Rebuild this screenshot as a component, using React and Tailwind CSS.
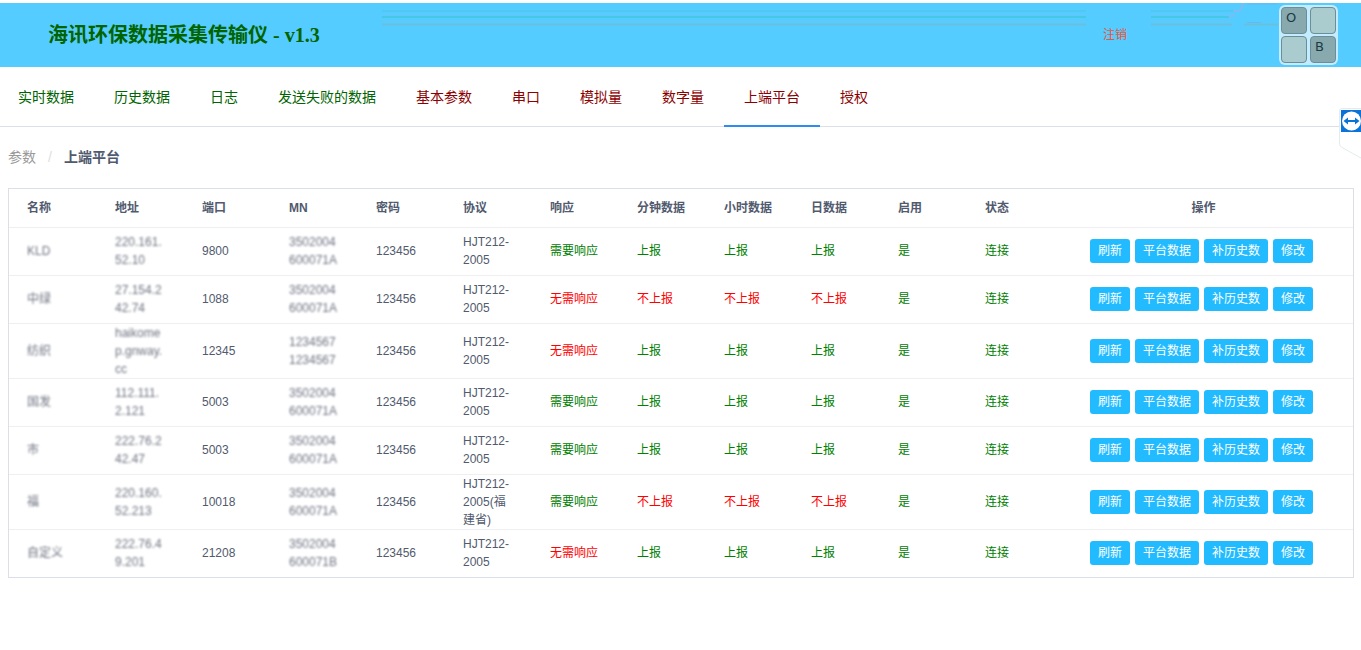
import { useState } from 'react';
import clsx from 'clsx';

const tabs = [
    { name: '实时数据', admin: false },
    { name: '历史数据', admin: false },
    { name: '日志', admin: false },
    { name: '发送失败的数据', admin: false },
    { name: '基本参数', admin: true },
    { name: '串口', admin: true },
    { name: '模拟量', admin: true },
    { name: '数字量', admin: true },
    { name: '上端平台', admin: true },
    { name: '授权', admin: true }
];

const platforms = [
    { id: 1, name: 'KLD', address: '220.161.52.10', port: 9800, mn: '3502004600071A', password: '123456', protocol: 'HJT212-2005', response: true, upload: true },
    { id: 2, name: '中绿', address: '27.154.242.74', port: 1088, mn: '3502004600071A', password: '123456', protocol: 'HJT212-2005', response: false, upload: false },
    { id: 3, name: '纺织', address: 'haikomep.gnway.cc', port: 12345, mn: '12345671234567', password: '123456', protocol: 'HJT212-2005', response: false, upload: true },
    { id: 4, name: '国发', address: '112.111.2.121', port: 5003, mn: '3502004600071A', password: '123456', protocol: 'HJT212-2005', response: true, upload: true },
    { id: 5, name: '市', address: '222.76.242.47', port: 5003, mn: '3502004600071A', password: '123456', protocol: 'HJT212-2005', response: true, upload: true },
    { id: 6, name: '福', address: '220.160.52.213', port: 10018, mn: '3502004600071A', password: '123456', protocol: 'HJT212-2005(福建省)', response: true, upload: false },
    { id: 7, name: '自定义', address: '222.76.49.201', port: 21208, mn: '3502004600071B', password: '123456', protocol: 'HJT212-2005', response: false, upload: true }
];

const Masked = ({ children }) => (
    <span className="text-[#6f7482] blur-[1px]">{children}</span>
);

const Flag = ({ on, yes, no }) => (
    <span className={on ? 'text-[#008000]' : 'text-[#ff0000]'}>{on ? yes : no}</span>
);

const columns = [
    { key: 'name', label: '名称', width: 'w-[88px]', render: (val) => <Masked>{val}</Masked> },
    { key: 'address', label: '地址', render: (val) => <Masked>{val}</Masked> },
    { key: 'port', label: '端口' },
    { key: 'mn', label: 'MN', render: (val) => <Masked>{val}</Masked> },
    { key: 'password', label: '密码' },
    { key: 'protocol', label: '协议' },
    { key: 'response', label: '响应', render: (val) => <Flag on={val} yes="需要响应" no="无需响应" /> },
    { key: 'minute', label: '分钟数据', render: (_, row) => <Flag on={row.upload} yes="上报" no="不上报" /> },
    { key: 'hour', label: '小时数据', render: (_, row) => <Flag on={row.upload} yes="上报" no="不上报" /> },
    { key: 'day', label: '日数据', render: (_, row) => <Flag on={row.upload} yes="上报" no="不上报" /> },
    { key: 'enabled', label: '启用', render: () => <Flag on yes="是" /> },
    { key: 'status', label: '状态', render: () => <Flag on yes="连接" /> }
];

const actions = ['刷新', '平台数据', '补历史数', '修改'];

const HeaderLines = () => (
    <div className="absolute inset-x-0 top-0 pointer-events-none flex pl-[382px] pr-[82px]">
        <svg className="h-[26px] grow" viewBox="0 0 704 26" preserveAspectRatio="none" fill="none">
            <path d="M0 8H704" stroke="#4dc9f2" strokeWidth="2" />
            <path d="M0 11.5H704M0 18.5H704" stroke="#66c6fa" />
            <path d="M0 14H704" stroke="#44c8e6" strokeWidth="2" />
            <path d="M0 21.5H704" stroke="#6bbfdc" strokeWidth="2" />
        </svg>
        <svg className="h-[26px] w-[193px] shrink-0" viewBox="0 0 193 26" fill="none">
            <path d="M65 8H150" stroke="#4dc9f2" strokeWidth="2" />
            <path d="M65 11.5H146M65 18.5H144" stroke="#66c6fa" />
            <path d="M65 14H144" stroke="#44c8e6" strokeWidth="2" />
            <path d="M65 21.5H146M158 21.5H192" stroke="#6bbfdc" strokeWidth="2" />
            <path d="M161 1H192M161 19.5H175" stroke="#66b8f0" />
            <path d="M143 14L149 12M147 8H152Q156 7 157 0" stroke="#7cbcf2" strokeWidth="2" />
        </svg>
    </div>
);

const KeyPad = () => (
    <div className="relative grid grid-cols-2 gap-x-[3px] gap-y-[2px] rounded-md bg-[#c4ecff] p-[2px] font-['DejaVu_Sans',sans-serif] text-[13px] leading-5 text-[#1b3a44]">
        <div className="h-[27px] w-[26px] rounded-[4px] border border-[#6a8f98] bg-[#88aaaf] pl-1">O</div>
        <div className="h-[27px] w-[26px] rounded-[4px] border border-[#6a8f98] bg-[#aacccf]" />
        <div className="h-[27px] w-[26px] rounded-[4px] border border-[#6a8f98] bg-[#aacccf]" />
        <div className="h-[27px] w-[26px] rounded-[4px] border border-[#6a8f98] bg-[#88aaaf] pl-1">B</div>
    </div>
);

const RemoteHandle = () => (
    <svg className="fixed right-0 top-[108px] h-[52px] w-[22px]" viewBox="0 0 22 52" fill="none">
        <path d="M22 50L3 39.500Q0.5 38 0.5 36V3Q0.5 0.5 3 0.5H22" fill="#fff" stroke="#e2ebee" />
        <rect x="2" y="2" width="20" height="22" fill="#0a73d9" />
        <circle cx="12.500" cy="13" r="9.500" fill="#fff" />
        <path d="M4.500 13L9 9.500V12H16V9.500L20.500 13L16 16.500V14H9V16.500Z" fill="#0a73d9" />
    </svg>
);

const App = () => {
    const [active, setActive] = useState('上端平台');

    return (
        <div className="bg-white pt-[3px] font-['Liberation_Sans','Noto_Sans_CJK_SC',sans-serif] text-[#515a6e]">
            <header className="relative flex h-16 items-center bg-[#55ccff] pl-12 pr-[23px]">
                <HeaderLines />
                <h1 className="relative font-['Liberation_Serif','Noto_Sans_CJK_SC',serif] text-xl font-bold text-[#006400]">海讯环保数据采集传输仪 - v1.3</h1>
                <a href="#logout" className="relative ml-auto mr-[152px] text-xs text-[#e8553a]">注销</a>
                <KeyPad />
            </header>

            <nav className="flex h-[60px] gap-10 border-b border-[#dcdee8] pl-[18px] text-sm">
                {tabs.map(tab => (
                    <a
                        key={tab.name}
                        href={`#${tab.name}`}
                        onClick={() => setActive(tab.name)}
                        className={clsx(
                            '-mx-5 h-[60px] border-b-2 px-5 leading-[60px]',
                            tab.admin ? 'text-[#8b0000]' : 'text-[#006400]',
                            tab.name === active ? 'border-[#2d8cf0]' : 'border-transparent'
                        )}
                    >
                        {tab.name}
                    </a>
                ))}
            </nav>

            <main className="px-2 pt-5">
                <div className="flex text-sm">
                    <a href="#params" className="text-[#999999]">参数</a>
                    <span className="mx-3 text-[#dcdee2]">/</span>
                    <span className="font-bold">上端平台</span>
                </div>

                <div className="mr-[-1px] mt-[21px] border border-[#dcdee8]">
                    <table className="w-full table-fixed border-collapse text-xs leading-[18px]">
                        <colgroup>
                            {columns.map(col => <col key={col.key} className={col.width} />)}
                            <col className="w-[299px]" />
                        </colgroup>
                        <thead>
                            <tr className="h-[38px] border-b border-[#efeff2]">
                                {columns.map(col => (
                                    <th key={col.key} className="whitespace-nowrap pl-[18px] text-left font-bold">{col.label}</th>
                                ))}
                                <th className="font-bold">操作</th>
                            </tr>
                        </thead>
                        <tbody>
                            {platforms.map(row => (
                                <tr key={row.id} className="h-12 border-b border-[#efeff2] last:border-b-0">
                                    {columns.map(col => (
                                        <td key={col.key} className="break-all pl-[18px] pr-[17px]">
                                            {col.render ? col.render(row[col.key], row) : row[col.key]}
                                        </td>
                                    ))}
                                    <td>
                                        <div className="flex justify-center gap-[5px] pr-1">
                                            {actions.map(action => (
                                                <button key={action} type="button" className="h-6 rounded-[3px] bg-[#22bbff] px-2 text-white hover:bg-[#57c5f7]">{action}</button>
                                            ))}
                                        </div>
                                    </td>
                                </tr>
                            ))}
                        </tbody>
                    </table>
                </div>
            </main>

            <RemoteHandle />
        </div>
    );
};

export default App;
